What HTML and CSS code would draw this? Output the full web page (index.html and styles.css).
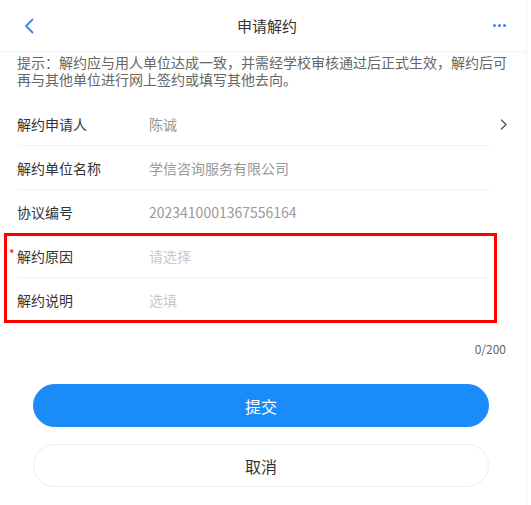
FILE: index.html
```html
<!doctype html>
<html lang="zh-CN">
<head>
  <meta charset="UTF-8">
  <meta name="viewport" content="width=device-width, initial-scale=1.0">
  <title>申请解约</title>
  <link rel="stylesheet" href="styles.css">
</head>
<body>

<div class="Page">
  <header class="NavBar">
    <span class="NavBar-back">
      <svg width="10" height="16" viewBox="0 0 10 16"><path d="M8.5 1.5 2 8l6.5 6.5" fill="none" stroke="#3a87f4" stroke-width="1.8" stroke-linecap="round" stroke-linejoin="round"/></svg>
    </span>
    <h1 class="NavBar-title">申请解约</h1>
    <span class="NavBar-more">
      <i></i><i></i><i></i>
    </span>
  </header>

  <p class="Tip">提示：解约应与用人单位达成一致，并需经学校审核通过后正式生效，解约后可再与其他单位进行网上签约或填写其他去向。</p>

  <div class="CellGroup">
    <div class="Cell">
      <div class="Cell-body">
        <span class="Cell-label">解约申请人</span>
        <span class="Cell-value">陈诚</span>
      </div>
      <span class="Cell-arrow">
        <svg width="7" height="11" viewBox="0 0 7 11"><path d="M1.5 1 6 5.5 1.5 10" fill="none" stroke="#555" stroke-width="1.3" stroke-linecap="round" stroke-linejoin="round"/></svg>
      </span>
    </div>
    <div class="Cell">
      <div class="Cell-body">
        <span class="Cell-label">解约单位名称</span>
        <span class="Cell-value">学信咨询服务有限公司</span>
      </div>
      <span class="Cell-arrow"></span>
    </div>
    <div class="Cell">
      <div class="Cell-body">
        <span class="Cell-label">协议编号</span>
        <span class="Cell-value">2023410001367556164</span>
      </div>
      <span class="Cell-arrow"></span>
    </div>

    <div class="CellGroup-marked">
      <div class="Cell">
        <div class="Cell-body">
          <span class="Cell-label is-required">解约原因</span>
          <span class="Cell-value is-placeholder">请选择</span>
        </div>
        <span class="Cell-arrow"></span>
      </div>
      <div class="Cell">
        <div class="Cell-body is-last">
          <span class="Cell-label">解约说明</span>
          <span class="Cell-value is-placeholder">选填</span>
        </div>
        <span class="Cell-arrow"></span>
      </div>
    </div>
  </div>

  <div class="WordLimit">0/200</div>

  <div class="Actions">
    <button type="button" class="Button Button--primary">提交</button>
    <button type="button" class="Button">取消</button>
  </div>
</div>

</body>
</html>
```

FILE: styles.css
```css
html,
body {
  margin: 0;
  background-color: white;
  color: #333;
  font-family: "Noto Sans CJK SC", "Liberation Sans", sans-serif;
}

.Page {
  width: 526px;
  min-height: 100vh;
  border-right: 1px solid #f1f2f4;
}

/* nav */

.NavBar {
  display: flex;
  align-items: center;
  height: 52px;
  padding: 0 20px 0 24px;
  border-bottom: 1px solid #f3f4f6;
  box-sizing: border-box;
}

.NavBar-back {
  display: flex;
  width: 40px;
  padding-top: 1px;
}

.NavBar-title {
  flex: 1;
  margin: 0;
  text-align: center;
  font-size: 15px;
  font-weight: normal;
  color: #333;
  padding-left: 4px;
}

.NavBar-more {
  display: flex;
  justify-content: flex-end;
  gap: 2px;
  width: 40px;
}

.NavBar-more i {
  width: 3px;
  height: 3px;
  border-radius: 50%;
  background-color: #3a87f4;
}

/* tip */

.Tip {
  margin: 0;
  padding: 2px 18px 14px 17px;
  font-size: 14px;
  line-height: 17px;
  color: #666;
}

/* cells */

.Cell {
  display: flex;
  height: 44px;
  padding-left: 17px;
}

.Cell-body {
  flex: 1;
  display: flex;
  align-items: center;
  border-bottom: 1px solid #f3f4f6;
  font-size: 14px;
}

.Cell-body.is-last {
  border-bottom: 0;
}

.Cell-label {
  position: relative;
  width: 132px;
  color: #333;
}

.Cell-label.is-required::before {
  position: absolute;
  left: -8px;
  top: -1px;
  color: #ee0a24;
  font-size: 12px;
  content: "*";
}

.Cell-value {
  color: #999;
}

.Cell-value.is-placeholder {
  color: #c8c9cc;
}

.Cell-arrow {
  display: flex;
  align-items: center;
  width: 36px;
  padding-left: 10px;
  box-sizing: border-box;
}

.CellGroup-marked {
  position: relative;
}

.CellGroup-marked::after {
  position: absolute;
  inset: -1px 29px -1px 4px;
  border: 3px solid #ff0000;
  content: "";
  pointer-events: none;
}

/* counter */

.WordLimit {
  margin-top: 19px;
  padding-right: 20px;
  text-align: right;
  font-size: 12px;
  line-height: 16px;
  color: #666;
}

/* buttons */

.Actions {
  display: flex;
  flex-direction: column;
  gap: 17px;
  padding: 27px 37px 0 33px;
}

.Button {
  height: 43px;
  border: 1px solid #ebedf0;
  border-radius: 22px;
  background-color: white;
  color: #333;
  font-family: inherit;
  font-size: 16px;
}

.Button--primary {
  border-color: #1a8cf9;
  background-color: #1a8cf9;
  color: white;
}
```
